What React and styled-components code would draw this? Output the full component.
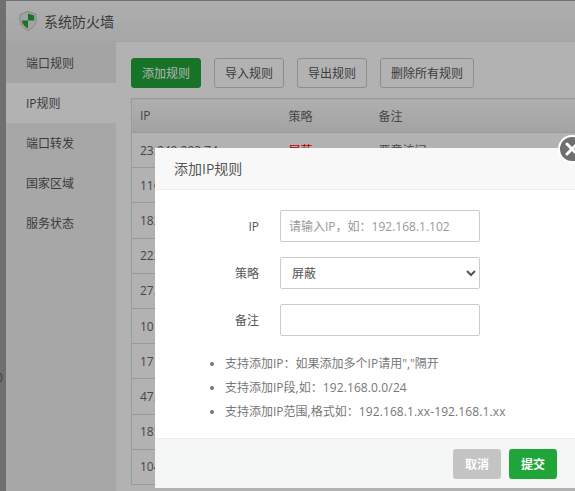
import React from "react";
import styled, { createGlobalStyle } from "styled-components";

const rows = [
  { ip: "23.249.203.74", rule: "屏蔽", note: "恶意访问" },
  { ip: "116.31.118.5" },
  { ip: "182.92.1.20" },
  { ip: "222.186.30.9" },
  { ip: "27.115.124.70" },
  { ip: "101.89.19.140" },
  { ip: "171.8.167.2" },
  { ip: "47.92.26.11" },
  { ip: "185.36.81.33" },
  { ip: "104.248.1.5" }
];

const GlobalStyle = createGlobalStyle`
  html, body {
    margin: 0;
    padding: 0;
    height: 100%;
    overflow: hidden;
    font-family: "Open Sans", "Noto Sans CJK SC", sans-serif;
  }
`;

const Page = styled.div`
  width: 575px;
  height: 491px;
  padding: 1px 0 0 6px;
  box-sizing: border-box;
  background: #9f9f9f;
  overflow: hidden;
  position: relative;
`;

const BehindGlyph = styled.span`
  position: absolute;
  left: -4px;
  top: 369px;
  font-size: 12px;
  color: #555;
`;

const Win = styled.div`
  position: relative;
  width: 640px;
  height: 490px;
  background: #fff;
`;

const TitleBar = styled.div`
  height: 41px;
  box-sizing: border-box;
  display: flex;
  align-items: center;
  gap: 7px;
  padding-left: 13px;
  background: linear-gradient(#f9f9f9, #efefef);
  border-bottom: 1px solid #e8e8e8;
  font-size: 14px;
  color: #555;
`;

const Body = styled.div`
  display: flex;
  height: 449px;
`;

const Side = styled.div`
  width: 110px;
  flex: none;
  background: #f0f0f0;
  padding-top: 1px;
`;

const SideItem = styled.div`
  height: 40px;
  line-height: 42px;
  padding-left: 20px;
  font-size: 12px;
  color: #555;
  background: ${p => (p.$active ? "#fff" : "transparent")};
  &:first-child {
    background: #ebebeb;
  }
`;

const Content = styled.div`
  flex: 1;
  padding: 16px 15px;
`;

const Toolbar = styled.div`
  display: flex;
  gap: 13px;
  margin-bottom: 10px;
`;

const Btn = styled.button`
  height: 30px;
  padding: 0 10px;
  font: inherit;
  font-size: 12px;
  border-radius: 3px;
  border: 1px solid ${p => (p.$primary ? "#20a53a" : "#ccc")};
  background: ${p => (p.$primary ? "#20a53a" : "#fff")};
  color: ${p => (p.$primary ? "#fff" : "#555")};
`;

const Table = styled.table`
  width: 470px;
  border-collapse: collapse;
  table-layout: fixed;
  font-size: 12px;
  color: #666;
  border: 1px solid #ddd;
`;

const Th = styled.th`
  box-sizing: border-box;
  height: 34px;
  padding: 0 8px;
  text-align: left;
  font-weight: 400;
  background: linear-gradient(#fbfbfb, #e9e9e9);
  border-bottom: 1px solid #ddd;
  width: ${p => (p.$w ? `${p.$w}px` : "auto")};
`;

const Td = styled.td`
  height: 34.2px;
  padding: 0 8px;
  border-bottom: 1px solid #ddd;
  color: ${p => (p.$red ? "#f00" : "#666")};
`;

const Overlay = styled.div`
  position: absolute;
  inset: 0;
  background: rgba(0, 0, 0, 0.3);
`;

const Modal = styled.div`
  position: absolute;
  left: 155px;
  top: 148px;
  width: 440px;
  height: 340px;
  background: #fff;
  display: flex;
  flex-direction: column;
`;

const ModalHead = styled.div`
  height: 42px;
  box-sizing: border-box;
  line-height: 41px;
  padding-left: 19px;
  font-size: 14px;
  color: #555;
  background: #f8f8f8;
  border-bottom: 1px solid #eee;
`;

const CloseBtn = styled.button`
  position: absolute;
  left: 403px;
  top: -13px;
  width: 28px;
  height: 28px;
  padding: 0;
  border-radius: 50%;
  border: 2px solid #fff;
  background: #6f6f6f;
  display: flex;
  align-items: center;
  justify-content: center;
`;

const Form = styled.div`
  flex: 1;
  padding-top: 20px;
`;

const Field = styled.div`
  display: flex;
  align-items: center;
  height: 32px;
  margin-bottom: 15px;
`;

const Label = styled.label`
  width: 104px;
  text-align: right;
  margin-right: 21px;
  font-size: 12px;
  color: #555;
`;

const Input = styled.input`
  width: 200px;
  height: 32px;
  box-sizing: border-box;
  padding: 0 8px;
  font: inherit;
  font-size: 12px;
  color: #555;
  border: 1px solid #ccc;
  border-radius: 2px;
  outline: none;
  &::placeholder {
    color: #999;
  }
`;

const Select = styled.select`
  width: 200px;
  height: 32px;
  box-sizing: border-box;
  padding: 0 5px 0 7px;
  font: inherit;
  font-size: 12px;
  color: #555;
  background: #fff;
  border: 1px solid #ccc;
  border-radius: 2px;
  outline: none;
`;

const Tips = styled.ul`
  margin: 0;
  padding: 1px 0 0 70px;
  font-size: 12px;
  line-height: 24px;
  color: #777;
`;

const Num = styled.span`
  letter-spacing: 0.12px;
`;

const Foot = styled.div`
  height: 50px;
  box-sizing: border-box;
  display: flex;
  align-items: center;
  gap: 8px;
  padding-left: 298px;
  background: #f5f6f6;
  border-top: 1px solid #eee;
`;

const FootBtn = styled.button`
  width: 48px;
  height: 30px;
  padding: 0;
  border: 0;
  border-radius: 3px;
  font: inherit;
  font-size: 12px;
  font-weight: 700;
  color: #fff;
  background: ${p => (p.$muted ? "#c4c4c4" : "#20a53a")};
`;

const Shield = () => (
  <svg width="18" height="20" viewBox="0 0 19 21">
    <path d="M9.5 0.5 L18 3.5 V10 C18 15 14 18.5 9.5 20.5 C5 18.5 1 15 1 10 V3.5 Z" fill="#e8e8e8" stroke="#bbb" />
    <path d="M9.5 2.5 L16 4.8 V10 H9.5 Z" fill="#20a53a" />
    <path d="M9.5 10 H3 C3.3 14 6 16.8 9.5 18.4 Z" fill="#20a53a" />
  </svg>
);

export default function App() {
  return (
    <Page>
      <GlobalStyle />
      <BehindGlyph>0</BehindGlyph>
      <Win>
        <TitleBar>
          <Shield />
          系统防火墙
        </TitleBar>
        <Body>
          <Side>
            <SideItem>端口规则</SideItem>
            <SideItem $active>IP规则</SideItem>
            <SideItem>端口转发</SideItem>
            <SideItem>国家区域</SideItem>
            <SideItem>服务状态</SideItem>
          </Side>
          <Content>
            <Toolbar>
              <Btn $primary>添加规则</Btn>
              <Btn>导入规则</Btn>
              <Btn>导出规则</Btn>
              <Btn>删除所有规则</Btn>
            </Toolbar>
            <Table>
              <thead>
                <tr>
                  <Th $w={149}>IP</Th>
                  <Th $w={90}>策略</Th>
                  <Th>备注</Th>
                </tr>
              </thead>
              <tbody>
                {rows.map(row => (
                  <tr key={row.ip}>
                    <Td>{row.ip}</Td>
                    <Td $red>{row.rule}</Td>
                    <Td>{row.note}</Td>
                  </tr>
                ))}
              </tbody>
            </Table>
          </Content>
        </Body>
      </Win>
      <Overlay />
      <Modal>
        <ModalHead>添加IP规则</ModalHead>
        <CloseBtn>
          <svg width="14" height="14" viewBox="0 0 14 14">
            <path d="M2 2 L12 12 M12 2 L2 12" stroke="#fff" strokeWidth="3" strokeLinecap="round" />
          </svg>
        </CloseBtn>
        <Form>
          <Field>
            <Label>IP</Label>
            <Input placeholder="请输入IP，如：192.168.1.102" />
          </Field>
          <Field>
            <Label>策略</Label>
            <Select defaultValue="block">
              <option value="block">屏蔽</option>
              <option value="allow">放行</option>
            </Select>
          </Field>
          <Field>
            <Label>备注</Label>
            <Input />
          </Field>
          <Tips>
            <li>支持添加IP：如果添加多个IP请用","隔开</li>
            <li>支持添加IP段,如：<Num>192.168.0.0/24</Num></li>
            <li>支持添加IP范围,格式如：<Num>192.168.1.xx-192.168.1.xx</Num></li>
          </Tips>
        </Form>
        <Foot>
          <FootBtn $muted>取消</FootBtn>
          <FootBtn>提交</FootBtn>
        </Foot>
      </Modal>
    </Page>
  );
}
